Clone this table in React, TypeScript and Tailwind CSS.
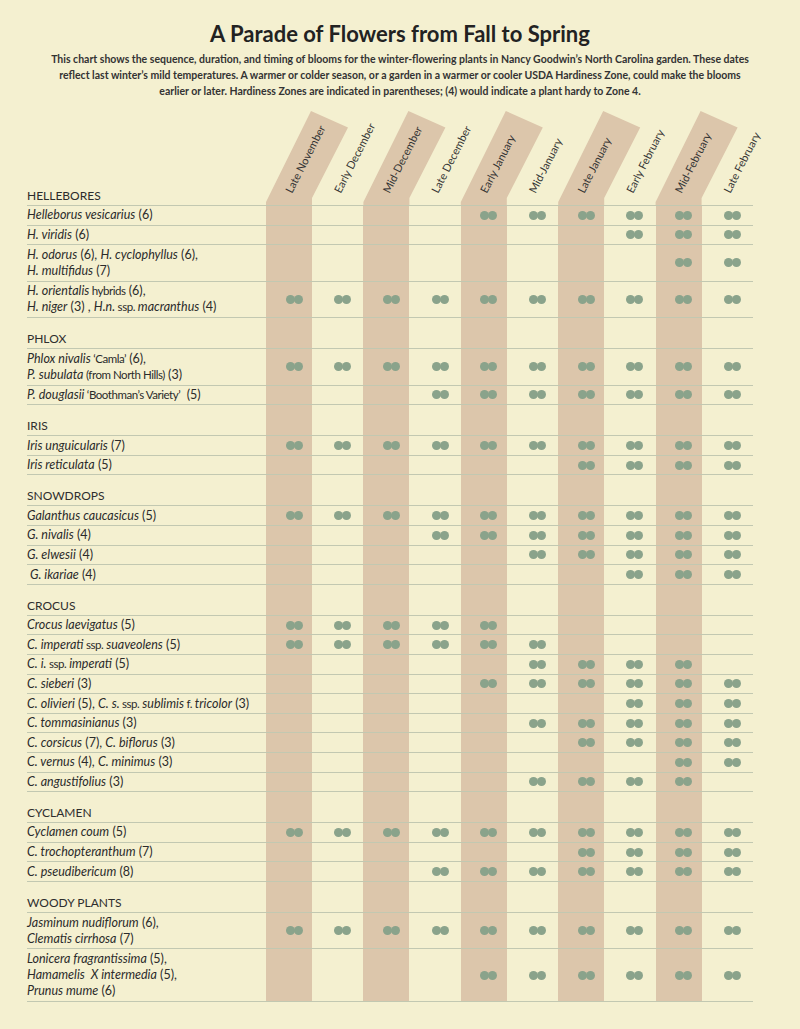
import React, { FC } from 'react';

type Seg = [string, 'i' | 'n' | 'c'];

interface IRow {
  lines: Seg[][];
  from: number;
  to: number;
  indent?: boolean;
}

interface ISection {
  title: string;
  rows: IRow[];
}

const COLUMNS = [
  'Late November',
  'Early December',
  'Mid-December',
  'Late December',
  'Early January',
  'Mid-January',
  'Late January',
  'Early February',
  'Mid-February',
  'Late February',
];

const COL_W = 48.7;

const SECTIONS: ISection[] = [
  {
    title: 'HELLEBORES',
    rows: [
      { lines: [[['Helleborus vesicarius', 'i'], [' (6)', 'n']]], from: 5, to: 10 },
      { lines: [[['H. viridis', 'i'], [' (6)', 'n']]], from: 8, to: 10 },
      {
        lines: [
          [['H. odorus', 'i'], [' (6), ', 'n'], ['H. cyclophyllus', 'i'], [' (6),', 'n']],
          [['H. multifidus', 'i'], [' (7)', 'n']],
        ],
        from: 9,
        to: 10,
      },
      {
        lines: [
          [['H. orientalis', 'i'], [' hybrids', 'c'], [' (6),', 'n']],
          [['H. niger', 'i'], [' (3) , ', 'n'], ['H.n.', 'i'], [' ssp.', 'c'], [' macranthus', 'i'], [' (4)', 'n']],
        ],
        from: 1,
        to: 10,
      },
    ],
  },
  {
    title: 'PHLOX',
    rows: [
      {
        lines: [
          [['Phlox nivalis', 'i'], [' ‘Camla’', 'c'], [' (6),', 'n']],
          [['P. subulata', 'i'], [' (from North Hills)', 'c'], [' (3)', 'n']],
        ],
        from: 1,
        to: 10,
      },
      { lines: [[['P. douglasii', 'i'], [' ‘Boothman’s Variety’', 'c'], ['  (5)', 'n']]], from: 4, to: 10 },
    ],
  },
  {
    title: 'IRIS',
    rows: [
      { lines: [[['Iris unguicularis', 'i'], [' (7)', 'n']]], from: 1, to: 10 },
      { lines: [[['Iris reticulata', 'i'], [' (5)', 'n']]], from: 7, to: 10 },
    ],
  },
  {
    title: 'SNOWDROPS',
    rows: [
      { lines: [[['Galanthus caucasicus', 'i'], [' (5)', 'n']]], from: 1, to: 10 },
      { lines: [[['G. nivalis', 'i'], [' (4)', 'n']]], from: 4, to: 10 },
      { lines: [[['G. elwesii', 'i'], [' (4)', 'n']]], from: 6, to: 10 },
      { lines: [[['G. ikariae', 'i'], [' (4)', 'n']]], from: 8, to: 10, indent: true },
    ],
  },
  {
    title: 'CROCUS',
    rows: [
      { lines: [[['Crocus laevigatus', 'i'], [' (5)', 'n']]], from: 1, to: 5 },
      { lines: [[['C. imperati', 'i'], [' ssp.', 'c'], [' suaveolens', 'i'], [' (5)', 'n']]], from: 1, to: 6 },
      { lines: [[['C. i.', 'i'], [' ssp.', 'c'], [' imperati', 'i'], [' (5)', 'n']]], from: 6, to: 9 },
      { lines: [[['C. sieberi', 'i'], [' (3)', 'n']]], from: 5, to: 10 },
      {
        lines: [
          [['C. olivieri', 'i'], [' (5), ', 'n'], ['C. s.', 'i'], [' ssp.', 'c'], [' sublimis', 'i'], [' f.', 'c'], [' tricolor', 'i'], [' (3)', 'n']],
        ],
        from: 8,
        to: 10,
      },
      { lines: [[['C. tommasinianus', 'i'], [' (3)', 'n']]], from: 6, to: 10 },
      { lines: [[['C. corsicus', 'i'], [' (7), ', 'n'], ['C. biflorus', 'i'], [' (3)', 'n']]], from: 7, to: 10 },
      { lines: [[['C. vernus', 'i'], [' (4), ', 'n'], ['C. minimus', 'i'], [' (3)', 'n']]], from: 9, to: 10 },
      { lines: [[['C. angustifolius', 'i'], [' (3)', 'n']]], from: 6, to: 9 },
    ],
  },
  {
    title: 'CYCLAMEN',
    rows: [
      { lines: [[['Cyclamen coum', 'i'], [' (5)', 'n']]], from: 1, to: 10 },
      { lines: [[['C. trochopteranthum', 'i'], [' (7)', 'n']]], from: 7, to: 10 },
      { lines: [[['C. pseudibericum', 'i'], [' (8)', 'n']]], from: 4, to: 10 },
    ],
  },
  {
    title: 'WOODY PLANTS',
    rows: [
      {
        lines: [
          [['Jasminum nudiflorum', 'i'], [' (6),', 'n']],
          [['Clematis cirrhosa', 'i'], [' (7)', 'n']],
        ],
        from: 1,
        to: 10,
      },
      {
        lines: [
          [['Lonicera fragrantissima', 'i'], [' (5),', 'n']],
          [['Hamamelis  X intermedia', 'i'], [' (5),', 'n']],
          [['Prunus mume', 'i'], [' (6)', 'n']],
        ],
        from: 5,
        to: 10,
      },
    ],
  },
];

const ROW_HEIGHT: Record<number, string> = {
  1: 'h-[19.6px]',
  2: 'h-[36.5px]',
  3: 'h-[53px]',
};

const BAND = 'bg-[linear-gradient(to_right,#dcc6ab_46px,transparent_46px)]';

const Dots: FC = () => (
  <div className="flex">
    <span className="block h-[9px] w-[9px] rounded-full bg-[#8aa38b]" />
    <span className="-ml-[1px] block h-[9px] w-[9px] rounded-full bg-[#8aa38b]" />
  </div>
);

const Cells: FC<{ from?: number; to?: number }> = ({ from = 0, to = -1 }) => (
  <div className="grid grid-cols-[repeat(10,48.7px)]">
    {COLUMNS.map((c, i) => (
      <div key={c} className={`flex items-center pl-[19.5px] ${i % 2 === 0 ? BAND : ''}`}>
        {i + 1 >= from && i + 1 <= to && <Dots />}
      </div>
    ))}
  </div>
);

const Label: FC<{ segs: Seg[] }> = ({ segs }) => (
  <div className="whitespace-pre">
    {segs.map(([text, kind], i) => (
      <span
        key={i}
        className={
          kind === 'i'
            ? 'italic'
            : kind === 'c'
              ? 'text-[11.5px] tracking-[-0.04em]'
              : ''
        }
      >
        {text}
      </span>
    ))}
  </div>
);

const PlantRow: FC<{ row: IRow }> = ({ row }) => (
  <div className={`flex border-b border-[#c2c8b1] ${ROW_HEIGHT[row.lines.length]}`}>
    <div
      className={`flex w-[239px] flex-col justify-center text-[12.5px] leading-[16px] ${row.indent ? 'pl-[3px]' : ''}`}
    >
      {row.lines.map((l, i) => (
        <Label key={i} segs={l} />
      ))}
    </div>
    <Cells from={row.from} to={row.to} />
  </div>
);

const SectionRow: FC<{ title: string }> = ({ title }) => (
  <div className="flex h-[31px] border-b border-[#c2c8b1]">
    <div className="flex w-[239px] items-end pb-[1px] leading-[16px] text-[#2e2e2e]">{title}</div>
    <Cells />
  </div>
);

const HeaderRow: FC = () => (
  <div className="flex border-b border-[#c2c8b1]">
    <div className="flex w-[239px] items-end pb-[1px] leading-[16px]">HELLEBORES</div>
    <svg width={487} height={100} className="block overflow-visible">
      {COLUMNS.map((c, i) => {
        const l = i * COL_W;
        return i % 2 === 0 ? (
          <polygon
            key={c}
            points={`${l},97 ${l + 45},6 ${l + 82},22.5 ${l + 46},93 ${l + 46},100 ${l},100`}
            fill="#dcc6ab"
          />
        ) : null;
      })}
      {COLUMNS.map((c, i) => {
        const x = i * COL_W + 26;
        const y = 89;
        return (
          <text
            key={c}
            x={x}
            y={y}
            transform={`rotate(-63 ${x} ${y})`}
            fontSize={11}
            fill="#333"
            fontFamily="Lato, sans-serif"
          >
            {c}
          </text>
        );
      })}
    </svg>
  </div>
);

const App: FC = () => {
  return (
    <div className="min-h-[1029px] w-full bg-[#f4f0d0] font-['Lato',sans-serif] text-[12px] text-[#2b2b2b]">
      <div className="flex flex-col items-center pt-[22px]">
        <h1 className="text-[22px] font-bold leading-[24px] text-[#222]">A Parade of Flowers from Fall to Spring</h1>
        <div className="mt-[5px] flex flex-col items-center text-[10.5px] font-bold leading-[16px] text-[#333]">
          <p className="whitespace-nowrap">
            This chart shows the sequence, duration, and timing of blooms for the winter-flowering plants in Nancy Goodwin’s North Carolina garden. These dates
          </p>
          <p className="whitespace-nowrap">
            reflect last winter’s mild temperatures. A warmer or colder season, or a garden in a warmer or cooler USDA Hardiness Zone, could make the blooms
          </p>
          <p className="whitespace-nowrap">
            earlier or later. Hardiness Zones are indicated in parentheses; (4) would indicate a plant hardy to Zone 4.
          </p>
        </div>
      </div>
      <div className="ml-[27px] mt-[6px] w-[726px]">
        <HeaderRow />
        {SECTIONS.map((s, si) => (
          <React.Fragment key={s.title}>
            {si > 0 && <SectionRow title={s.title} />}
            {s.rows.map((r, ri) => (
              <PlantRow key={ri} row={r} />
            ))}
          </React.Fragment>
        ))}
      </div>
    </div>
  );
};

export default App;
